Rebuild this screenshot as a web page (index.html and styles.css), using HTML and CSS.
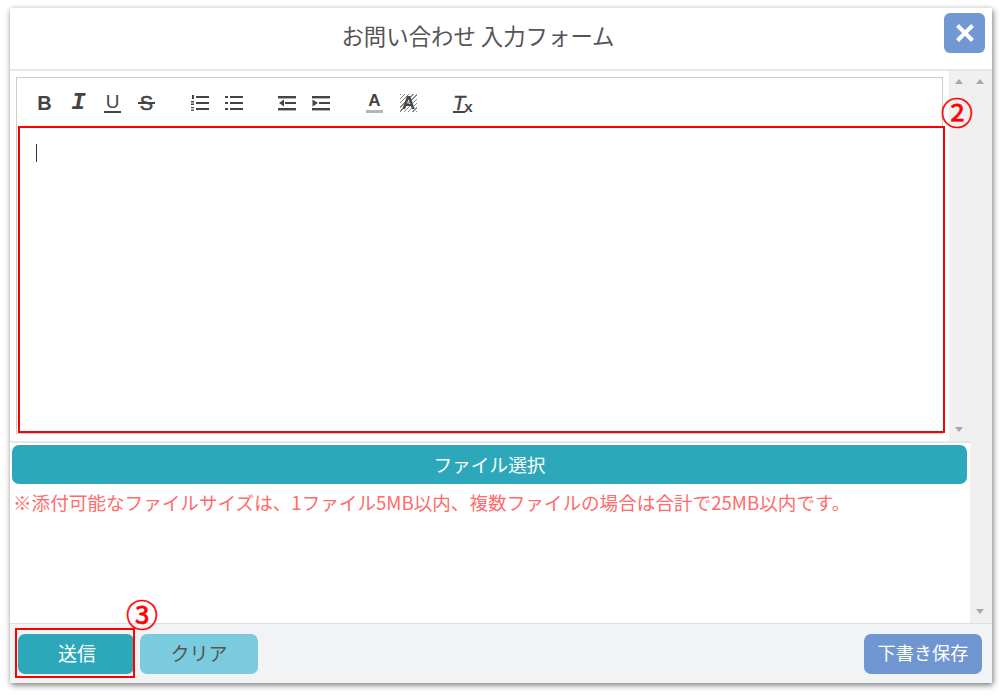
FILE: index.html
```html
<!DOCTYPE html>
<html lang="ja">
<head>
    <meta charset="UTF-8" />
    <meta name="viewport" content="width=device-width,initial-scale=1.0" />
    <title>お問い合わせ 入力フォーム</title>
    <link rel="stylesheet" href="styles.css">
</head>
<body>
    <div class="modal">
        <div class="modal-header">
            <div class="modal-title">お問い合わせ 入力フォーム</div>
            <button class="close-btn" aria-label="閉じる">
                <svg width="22" height="22" viewBox="0 0 22 22"><path d="M3.5 3.5 18.5 18.5M18.5 3.5 3.5 18.5" stroke="#fff" stroke-width="4"/></svg>
            </button>
        </div>

        <div class="modal-body">
            <div class="form-area">
                <div class="editor-row">
                    <div class="editor">
                        <div class="toolbar">
                            <div class="tool-group first">
                                <span class="tool t-bold">B</span>
                                <span class="tool t-italic">I</span>
                                <span class="tool t-under">U</span>
                                <span class="tool t-strike">S</span>
                            </div>
                            <div class="tool-group second">
                                <span class="tool">
                                    <svg width="18" height="16" viewBox="0 0 18 16"><g fill="#444"><rect x="5" y="1" width="13" height="2"/><rect x="5" y="7" width="13" height="2"/><rect x="5" y="13" width="13" height="2"/><rect x="1" y="0" width="2" height="4"/><rect x="0" y="6" width="3" height="1.5"/><rect x="0" y="8.5" width="3" height="1.5"/><rect x="0" y="12" width="3" height="1.2"/><rect x="0" y="14.5" width="3" height="1.3"/></g></svg>
                                </span>
                                <span class="tool">
                                    <svg width="18" height="16" viewBox="0 0 18 16"><g fill="#444"><rect x="5" y="1" width="13" height="2"/><rect x="5" y="7" width="13" height="2"/><rect x="5" y="13" width="13" height="2"/><rect x="0" y="1" width="3" height="2"/><rect x="0" y="7" width="3" height="2"/><rect x="0" y="13" width="3" height="2"/></g></svg>
                                </span>
                            </div>
                            <div class="tool-group third">
                                <span class="tool">
                                    <svg width="18" height="16" viewBox="0 0 18 16"><g fill="#444"><rect x="0" y="1" width="18" height="2.4"/><rect x="7" y="7" width="11" height="2"/><rect x="0" y="13" width="18" height="2.4"/><path d="M1 8 6 4.5V11.5Z"/></g></svg>
                                </span>
                                <span class="tool">
                                    <svg width="18" height="16" viewBox="0 0 18 16"><g fill="#444"><rect x="0" y="1" width="18" height="2.4"/><rect x="7" y="7" width="11" height="2"/><rect x="0" y="13" width="18" height="2.4"/><path d="M6 8 0.5 4.5V11.5Z"/></g></svg>
                                </span>
                            </div>
                            <div class="tool-group fourth">
                                <span class="tool t-color">A</span>
                                <span class="tool t-back">A</span>
                            </div>
                            <div class="tool-group fifth">
                                <span class="tool t-clear"><span class="t-clear-t">T</span><small>x</small></span>
                            </div>
                        </div>
                        <div class="edit-area"><span class="caret"></span></div>
                    </div>
                    <div class="scrollbar inner">
                        <span class="arrow up"></span>
                        <span class="arrow down"></span>
                    </div>
                </div>

                <div class="file-section">
                    <button class="file-btn">ファイル選択</button>
                    <div class="note">※添付可能なファイルサイズは、1ファイル5MB以内、複数ファイルの場合は合計で25MB以内です。</div>
                </div>
            </div>
            <div class="scrollbar outer">
                <span class="arrow up"></span>
                <span class="arrow down"></span>
            </div>
        </div>

        <div class="modal-footer">
            <div class="footer-left">
                <button class="btn btn-send">送信</button>
                <button class="btn btn-clear">クリア</button>
            </div>
            <button class="btn btn-draft">下書き保存</button>
            <div class="mark-box"></div>
            <div class="mark mark-3">③</div>
        </div>

        <div class="mark mark-2">②</div>
    </div>
</body>
</html>
```

FILE: styles.css
```css
* {
    box-sizing: border-box;
}

body {
    margin: 0;
    background: #fff;
    font-family: "Noto Sans CJK JP", "Noto Sans", sans-serif;
    color: #444;
    height: 696px;
    overflow: hidden;
    padding: 8px 0 0 10px;
}

button {
    font-family: inherit;
    border: none;
    cursor: pointer;
}

.modal {
    position: relative;
    width: 982px;
    height: 675px;
    background: #fff;
    display: flex;
    flex-direction: column;
    box-shadow: 1px 2px 6px rgba(0,0,0,0.55);
}

.modal-header {
    height: 63px;
    flex: none;
    display: flex;
    align-items: center;
    justify-content: center;
    position: relative;
    border-bottom: 2px solid #e6e6e6;
}

.modal-title {
    font-size: 22.4px;
    color: #555;
    margin-top: -8px;
    margin-left: -46px;
}

.close-btn {
    position: absolute;
    top: 5px;
    right: 7px;
    width: 41px;
    height: 40px;
    border-radius: 6px;
    background: #7298d3;
    display: flex;
    align-items: center;
    justify-content: center;
    padding: 0;
}

.modal-body {
    flex: 1;
    display: flex;
    min-height: 0;
}

.form-area {
    flex: 1;
    display: flex;
    flex-direction: column;
}

.editor-row {
    height: 372px;
    flex: none;
    display: flex;
    border-bottom: 2px solid #e6e6e6;
}

.editor {
    flex: 1;
    margin: 6px 6px 7px 6px;
    border: 1px solid #ccc;
    display: flex;
    flex-direction: column;
}

.toolbar {
    height: 48px;
    flex: none;
    display: flex;
    align-items: center;
    padding-left: 19px;
    padding-top: 1px;
}

.tool-group {
    display: flex;
    align-items: center;
    gap: 17px;
}

.tool-group.second {
    margin-left: 36px;
    gap: 16px;
}

.tool-group.third {
    margin-left: 35px;
    gap: 16px;
}

.tool-group.fourth {
    margin-left: 36px;
}

.tool-group.fifth {
    margin-left: 36px;
}

.tool {
    display: flex;
    align-items: center;
    justify-content: center;
    width: 17px;
    height: 20px;
    font-family: "Liberation Sans", sans-serif;
    font-size: 19px;
    color: #444;
    line-height: 1;
}

.tool-group.second .tool,
.tool-group.third .tool {
    width: 18px;
}

.t-bold {
    font-weight: bold;
    font-size: 20px;
}

.t-italic {
    font-family: "Liberation Mono", monospace;
    font-style: italic;
    font-weight: bold;
    font-size: 24px;
}

.t-under {
    background: linear-gradient(#444, #444) bottom center / 17px 2px no-repeat;
    padding-bottom: 3px;
}

.t-strike {
    font-size: 20px;
    -webkit-text-stroke: 0.5px #444;
    background: linear-gradient(#444, #444) center / 17px 2px no-repeat;
}

.t-color {
    font-weight: bold;
    font-size: 17px;
    height: 20px;
    padding-bottom: 2px;
    border-bottom: 3px solid #b5b5b5;
}

.t-back {
    font-weight: bold;
    font-size: 18px;
    height: 18px;
    background: repeating-linear-gradient(135deg, #8a8a8a 0 1px, #fff 1px 3px);
}

.t-clear {
    width: 20px;
    justify-content: flex-start;
}

.t-clear-t {
    font-style: italic;
    font-size: 20px;
    -webkit-text-stroke: 0.4px #444;
    text-decoration: underline;
    text-decoration-thickness: 2px;
}

.t-clear small {
    font-weight: bold;
    font-size: 15px;
    margin-top: 7px;
    margin-left: -1px;
}

.edit-area {
    flex: 1;
    margin: 0 -3px 0 1px;
    border: 2px solid #f00;
    background: #fff;
    padding: 16px 16px;
    position: relative;
}

.caret {
    display: block;
    width: 1px;
    height: 18px;
    background: #333;
}

.scrollbar {
    flex: none;
    background: #f0f0f0;
    display: flex;
    flex-direction: column;
    justify-content: space-between;
    align-items: center;
}

.scrollbar.inner {
    width: 21px;
    padding: 8px 2px 9px 0;
}

.scrollbar.outer {
    width: 22px;
    padding: 8px 2px 9px 0;
}

.arrow {
    width: 0;
    height: 0;
    border-left: 4.5px solid transparent;
    border-right: 4.5px solid transparent;
}

.arrow.up {
    border-bottom: 5px solid #a8a8a8;
}

.arrow.down {
    border-top: 5px solid #a8a8a8;
}

.file-section {
    flex: 1;
    padding: 2px 3px 0 2px;
}

.file-btn {
    display: block;
    width: 100%;
    height: 39px;
    background: #2da8bb;
    color: #fff;
    font-size: 18.7px;
    border-radius: 7px;
    padding: 0 0 3px;
}

.note {
    font-size: 18.6px;
    color: #ff6b6b;
    margin-top: 6px;
    line-height: 24px;
    white-space: nowrap;
    padding-left: 1px;
}

.modal-footer {
    height: 60px;
    flex: none;
    position: relative;
    background: #f2f3f5;
    border-top: 1px solid #dedede;
    display: flex;
    align-items: center;
    justify-content: space-between;
    padding: 0 10px 0 8px;
}

.footer-left {
    display: flex;
    gap: 6px;
}

.btn {
    height: 40px;
    border-radius: 7px;
    font-size: 19px;
    padding: 0 0 3px;
}

.btn-send {
    width: 116px;
    background: #2da8bb;
    color: #fff;
    padding-left: 2px;
}

.btn-clear {
    width: 118px;
    background: #7bcbdf;
    color: #555;
}

.btn-draft {
    width: 118px;
    background: #7096d1;
    color: #fff;
    font-size: 18.2px;
}

.mark-box {
    position: absolute;
    left: 5px;
    top: 4px;
    width: 120px;
    height: 50px;
    border: 2px solid #f00;
}

.mark {
    position: absolute;
    color: #f00;
    font-size: 32px;
    line-height: 1;
    -webkit-text-stroke: 0.6px #f00;
    font-family: "Noto Sans CJK JP", sans-serif;
}

.mark-2 {
    left: 931px;
    top: 87px;
}

.mark-3 {
    left: 116px;
    top: -27px;
}
```
